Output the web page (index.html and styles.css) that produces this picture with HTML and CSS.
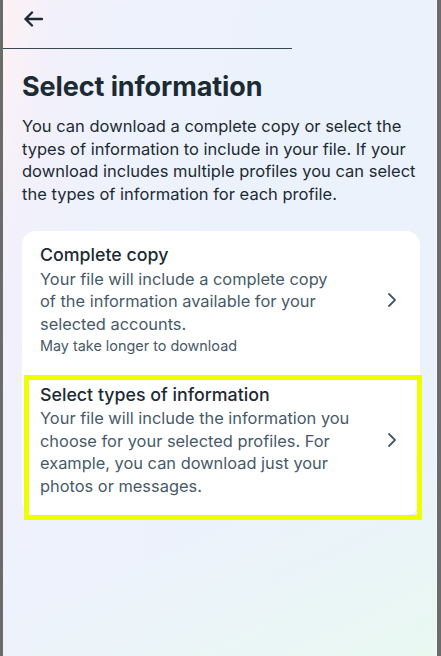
FILE: index.html
```html
<!DOCTYPE html>
<html lang="en">

<head>
    <title>Select information</title>
    <link rel="stylesheet" href="styles.css">
</head>

<body>
    <div class="screen">
        <header class="topbar">
            <button class="back" type="button" aria-label="Back">
                <svg width="20" height="16" viewBox="0 0 20 16">
                    <path d="M19 8H2.5M9 1.5L2.5 8L9 14.5" fill="none" stroke="#1c2b33" stroke-width="2.4"
                        stroke-linecap="round" stroke-linejoin="round" />
                </svg>
            </button>
        </header>

        <main class="content">
            <h1>Select information</h1>
            <p class="intro">You can download a complete copy or select the types of information to include in your
                file. If your download includes multiple profiles you can select the types of information for each
                profile.</p>

            <div class="card">
                <a class="option" href="#">
                    <div class="option-text">
                        <div class="option-title">Complete copy</div>
                        <div class="option-desc">Your file will include a complete copy<br>of the information
                            available for your selected accounts.</div>
                        <div class="option-note">May take longer to download</div>
                    </div>
                    <svg class="chevron" width="10" height="16" viewBox="0 0 10 16">
                        <path d="M2 2L8 8L2 14" fill="none" stroke="#465a69" stroke-width="1.8"
                            stroke-linecap="round" stroke-linejoin="round" />
                    </svg>
                </a>
                <a class="option highlighted" href="#">
                    <div class="option-text">
                        <div class="option-title">Select types of information</div>
                        <div class="option-desc">Your file will include the information you choose for your selected
                            profiles. For example, you can download just your photos or messages.</div>
                    </div>
                    <svg class="chevron" width="10" height="16" viewBox="0 0 10 16">
                        <path d="M2 2L8 8L2 14" fill="none" stroke="#465a69" stroke-width="1.8"
                            stroke-linecap="round" stroke-linejoin="round" />
                    </svg>
                </a>
            </div>
        </main>
    </div>
</body>

</html>
```

FILE: styles.css
```css
:root {
    font-family: "Inter", "Roboto", sans-serif;
    color: #1c2b33;
}

html,
body {
    margin: 0;
    height: 100%;
}

body {
    background: #6b6b6b;
}

.screen {
    box-sizing: border-box;
    height: 656px;
    margin: 0 4px 0 3px;
    background:
        linear-gradient(155deg, transparent 72%, #e9f8f1 100%),
        linear-gradient(100deg, #fdf2f4 0%, #f2f0fb 10%, #edf2fc 26%, #eaf2fc 100%);
    border-right: 1px solid #f5f8fc;
}

.topbar {
    width: 289px;
    height: 48px;
    border-bottom: 1.5px solid #3a4750;
    display: flex;
    align-items: center;
}

.back {
    background: none;
    border: 0;
    padding: 0;
    margin: -10px 0 0 20px;
    display: flex;
}

.content {
    padding: 0 16px 0 19px;
}

h1 {
    margin: 21px 0 0;
    font-size: 27px;
    font-weight: 700;
    line-height: 34px;
    letter-spacing: -0.1px;
}

.intro {
    margin: 11px 0 0;
    font-size: 16.5px;
    line-height: 22.5px;
    color: #1c2b33;
}

.card {
    margin-top: 26px;
    background: #fff;
    border-radius: 14px;
    display: flex;
    flex-direction: column;
}

.option {
    display: flex;
    align-items: center;
    text-decoration: none;
    color: inherit;
    padding: 12px 23px 14.5px 18px;
}

.option-text {
    flex: 1;
    padding-right: 26px;
}

.option-title {
    font-size: 17.8px;
    font-weight: 500;
    line-height: 24.5px;
    color: #1c2b33;
}

.option-desc {
    font-size: 16.4px;
    line-height: 22.6px;
    color: #465a69;
}

.option-note {
    font-size: 14.4px;
    line-height: 21px;
    color: #465a69;
}

.highlighted {
    position: relative;
    padding-top: 12px;
    padding-bottom: 17px;
}

.highlighted::after {
    content: "";
    position: absolute;
    left: 2px;
    right: -2px;
    top: 4px;
    bottom: -5px;
    border: 5px solid #eeff00;
}
```
